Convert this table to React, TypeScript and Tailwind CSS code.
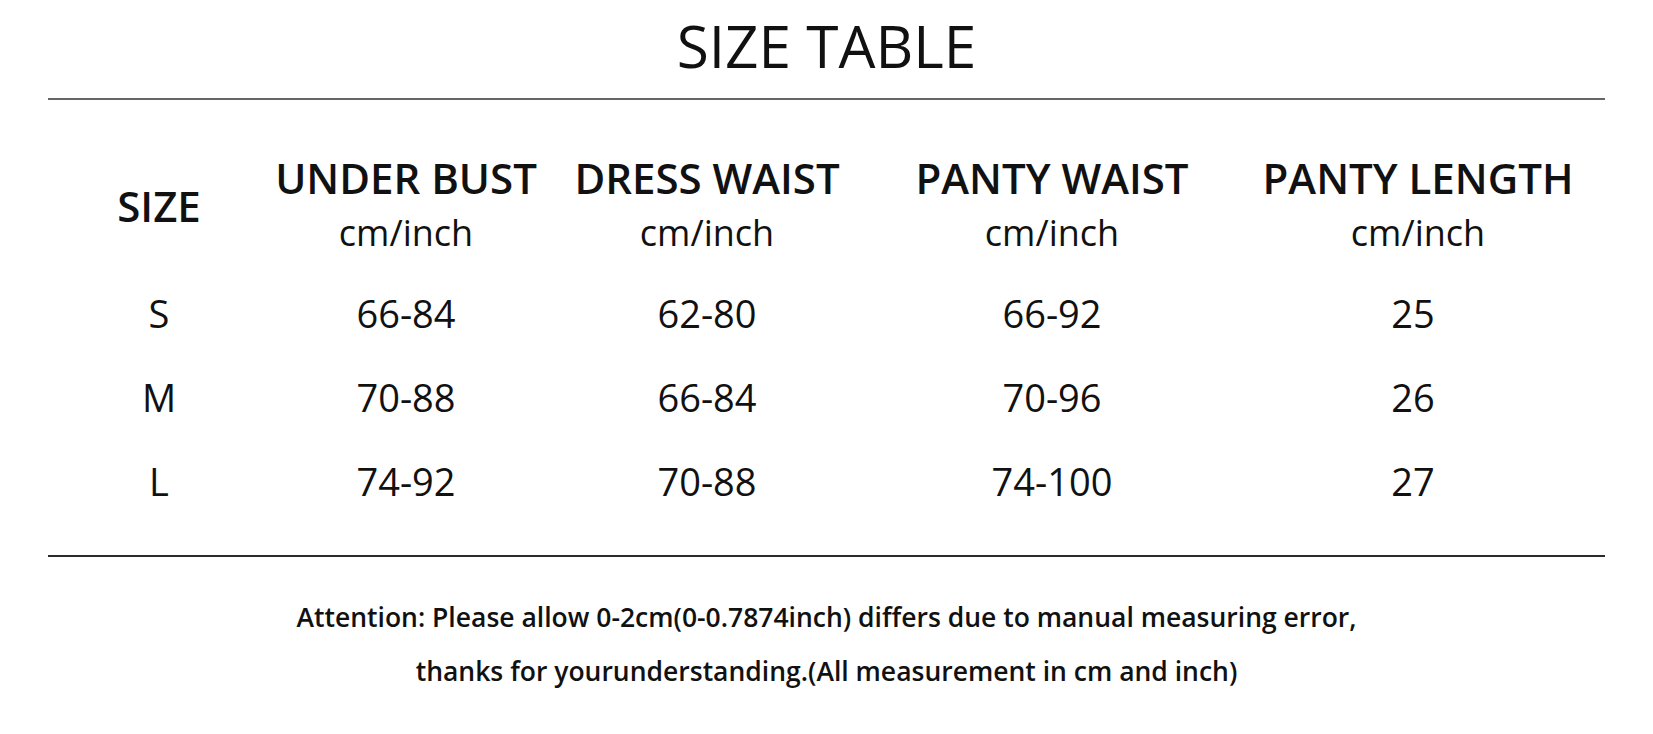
const columns = [
  { title: "UNDER BUST", unit: "cm/inch" },
  { title: "DRESS WAIST", unit: "cm/inch" },
  { title: "PANTY WAIST", unit: "cm/inch" },
  { title: "PANTY LENGTH", unit: "cm/inch" },
];

const rows = [
  { size: "S", values: ["66-84", "62-80", "66-92", "25"] },
  { size: "M", values: ["70-88", "66-84", "70-96", "26"] },
  { size: "L", values: ["74-92", "70-88", "74-100", "27"] },
];

const grid = "grid grid-cols-[222px_272px_330px_360px_372px]";

export default function App() {
  return (
    <div className="min-h-[734px] w-full bg-white font-['Open_Sans',sans-serif] text-[#111]">
      {/* title */}
      <h1 className="pt-[16px] text-center text-[58.5px] font-normal leading-[58px]">
        SIZE TABLE
      </h1>
      <div className="mx-[48px] mt-[24px] h-[2px] bg-[#666]" />

      {/* header */}
      <div className={`${grid} mx-[48px] mt-[53px]`}>
        <div className="flex items-center justify-center pb-[5px] text-[42px] font-semibold">
          SIZE
        </div>
        {columns.map((c) => (
          <div key={c.title} className="flex flex-col items-center">
            <span className="h-[50px] text-[42px] font-semibold leading-[50px] whitespace-nowrap">
              {c.title}
            </span>
            <span className="h-[60px] text-[36px] leading-[60px]">{c.unit}</span>
          </div>
        ))}
      </div>

      {/* rows */}
      <div className="mx-[48px] mt-[8px]">
        {rows.map((r) => (
          <div key={r.size} className={`${grid} h-[84px] items-center text-[38px]`}>
            <div className="text-center">{r.size}</div>
            {r.values.map((v, i) => (
              <div key={i} className={i === 3 ? "pr-[10px] text-center" : "text-center"}>
                {v}
              </div>
            ))}
          </div>
        ))}
      </div>

      <div className="mx-[48px] mt-[32px] h-[2px] bg-[#2a2a2a]" />

      {/* note */}
      <div className="mt-[33px] text-center text-[26.5px] font-semibold leading-[54px]">
        <p>Attention: Please allow 0-2cm(0-0.7874inch) differs due to manual measuring error,</p>
        <p>thanks for yourunderstanding.(All measurement in cm and inch)</p>
      </div>
    </div>
  );
}
